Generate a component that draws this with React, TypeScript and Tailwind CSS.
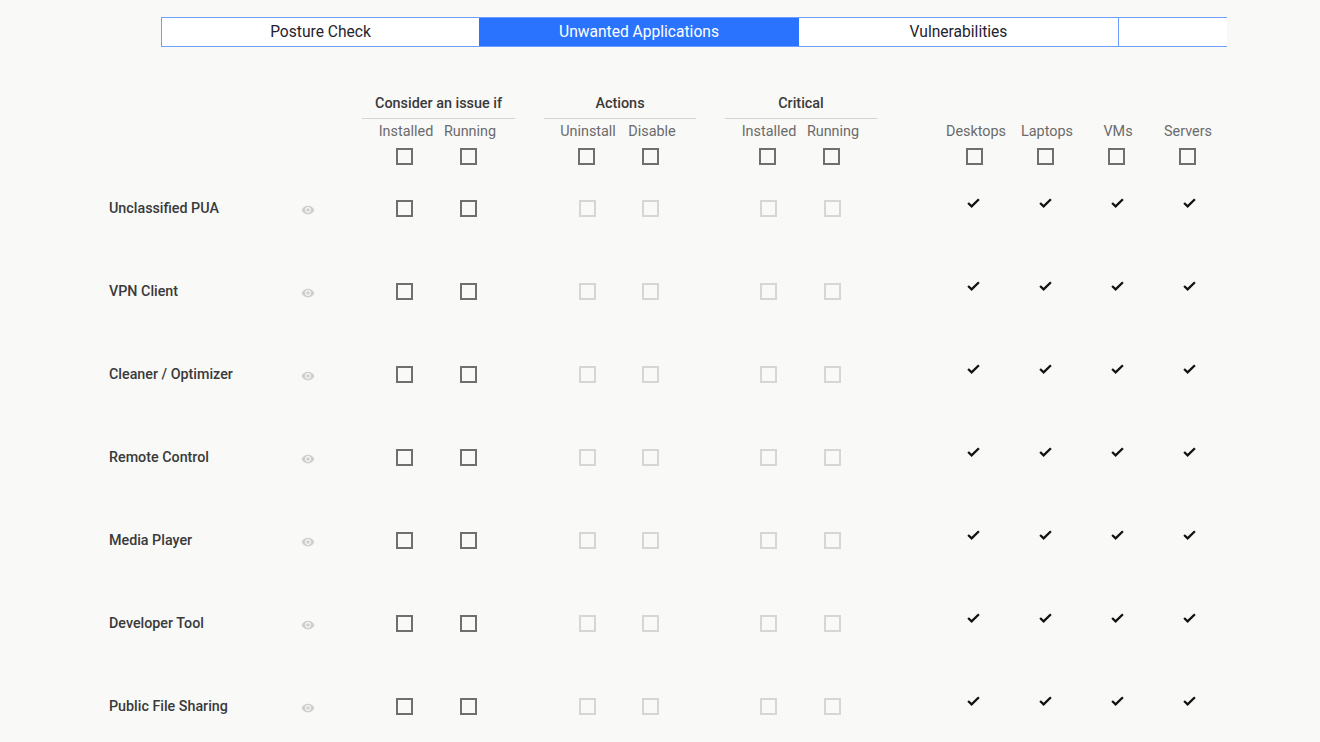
import React from "react";

const rows = [
  "Unclassified PUA",
  "VPN Client",
  "Cleaner / Optimizer",
  "Remote Control",
  "Media Player",
  "Developer Tool",
  "Public File Sharing",
];

function Box({ muted }: { muted?: boolean }) {
  return (
    <span
      className={
        muted
          ? "block w-[17px] h-[17px] shrink-0 border-2 border-[#d6d6d6]"
          : "block w-[17px] h-[17px] shrink-0 border-2 border-[#6f6f6f]"
      }
    />
  );
}

function Eye() {
  return (
    <svg width="14" height="14" viewBox="0 0 24 24" fill="#cfcfcf">
      <path d="M12 4.5C7 4.5 2.73 7.61 1 12c1.73 4.39 6 7.5 11 7.5s9.27-3.11 11-7.5c-1.73-4.39-6-7.5-11-7.5zM12 17c-2.76 0-5-2.24-5-5s2.24-5 5-5 5 2.24 5 5-2.24 5-5 5zm0-8c-1.66 0-3 1.34-3 3s1.34 3 3 3 3-1.34 3-3-1.34-3-3-3z" />
    </svg>
  );
}

function Check() {
  return (
    <svg width="13" height="10" viewBox="0 0 13 10" fill="none" stroke="#111111" strokeWidth="2.3">
      <path d="M1.1 5l3.5 3.3L11.9 1.2" />
    </svg>
  );
}

function Group({ title, a, b, className }: { title: string; a: string; b: string; className: string }) {
  return (
    <div className={className}>
      <div className="h-[29px] border-b border-[#d4d4d4] text-center text-[14.4px] font-medium leading-[20px] pt-[4px] text-[#3a3a3a]">
        {title}
      </div>
      <div className="flex pl-[12px] mt-[3px] h-[20px] text-[14.4px] leading-[20px] text-[#6b6b6b]">
        <span className="w-[64px] text-center whitespace-nowrap">{a}</span>
        <span className="w-[64px] text-center whitespace-nowrap">{b}</span>
      </div>
      <div className="flex pl-[34px] gap-[47px] mt-[6px]">
        <Box />
        <Box />
      </div>
    </div>
  );
}

export default function App() {
  return (
    <div className="h-[742px] w-[1320px] overflow-hidden bg-[#f9f9f8] pt-[17px] font-['Roboto',sans-serif]">
      <div className="ml-[161px] w-[1066px] h-[30px] flex border-y border-[#6d9eff] bg-white text-[15.6px] text-[#1f2430]">
        <div className="w-[318px] border-l border-[#6d9eff] flex items-center justify-center pt-[2px]">Posture Check</div>
        <div className="w-[320px] bg-[#2a73ff] text-white flex items-center justify-center pt-[2px]">Unwanted Applications</div>
        <div className="w-[320px] border-r border-[#6d9eff] flex items-center justify-center pt-[2px]">Vulnerabilities</div>
      </div>

      <div className="mt-[43px] h-[77px] flex pl-[362px]">
        <Group title="Consider an issue if" a="Installed" b="Running" className="w-[153px] mr-[29px]" />
        <Group title="Actions" a="Uninstall" b="Disable" className="w-[152px] mr-[29px]" />
        <Group title="Critical" a="Installed" b="Running" className="w-[152px] mr-[60px]" />
        <div className="flex flex-col pt-[32px] w-[300px]">
          <div className="flex h-[20px] text-[14.4px] leading-[20px] text-[#6b6b6b]">
            <span className="w-[80px] -ml-[1px] text-center">Desktops</span>
            <span className="w-[62px] text-center">Laptops</span>
            <span className="w-[80px] text-center">VMs</span>
            <span className="w-[60px] text-center">Servers</span>
          </div>
          <div className="flex mt-[6px] pl-[29px]">
            <span className="w-[71px]"><Box /></span>
            <span className="w-[71px]"><Box /></span>
            <span className="w-[71px]"><Box /></span>
            <Box />
          </div>
        </div>
      </div>

      <div className="pl-[109px]">
        {rows.map((r) => (
          <div key={r} className="flex h-[83px] items-center">
            <div className="w-[192px] text-[14.3px] font-medium text-[#3a3a3a]">{r}</div>
            <div className="w-[95px] pt-[3px]"><Eye /></div>
            <div className="w-[64px]"><Box /></div>
            <div className="w-[119px]"><Box /></div>
            <div className="w-[63px]"><Box muted /></div>
            <div className="w-[118px]"><Box muted /></div>
            <div className="w-[64px]"><Box muted /></div>
            <div className="w-[143px]"><Box muted /></div>
            <div className="flex -translate-y-[6px]">
              <div className="w-[72px]"><Check /></div>
              <div className="w-[72px]"><Check /></div>
              <div className="w-[72px]"><Check /></div>
              <div className="w-[72px]"><Check /></div>
            </div>
          </div>
        ))}
      </div>
    </div>
  );
}
